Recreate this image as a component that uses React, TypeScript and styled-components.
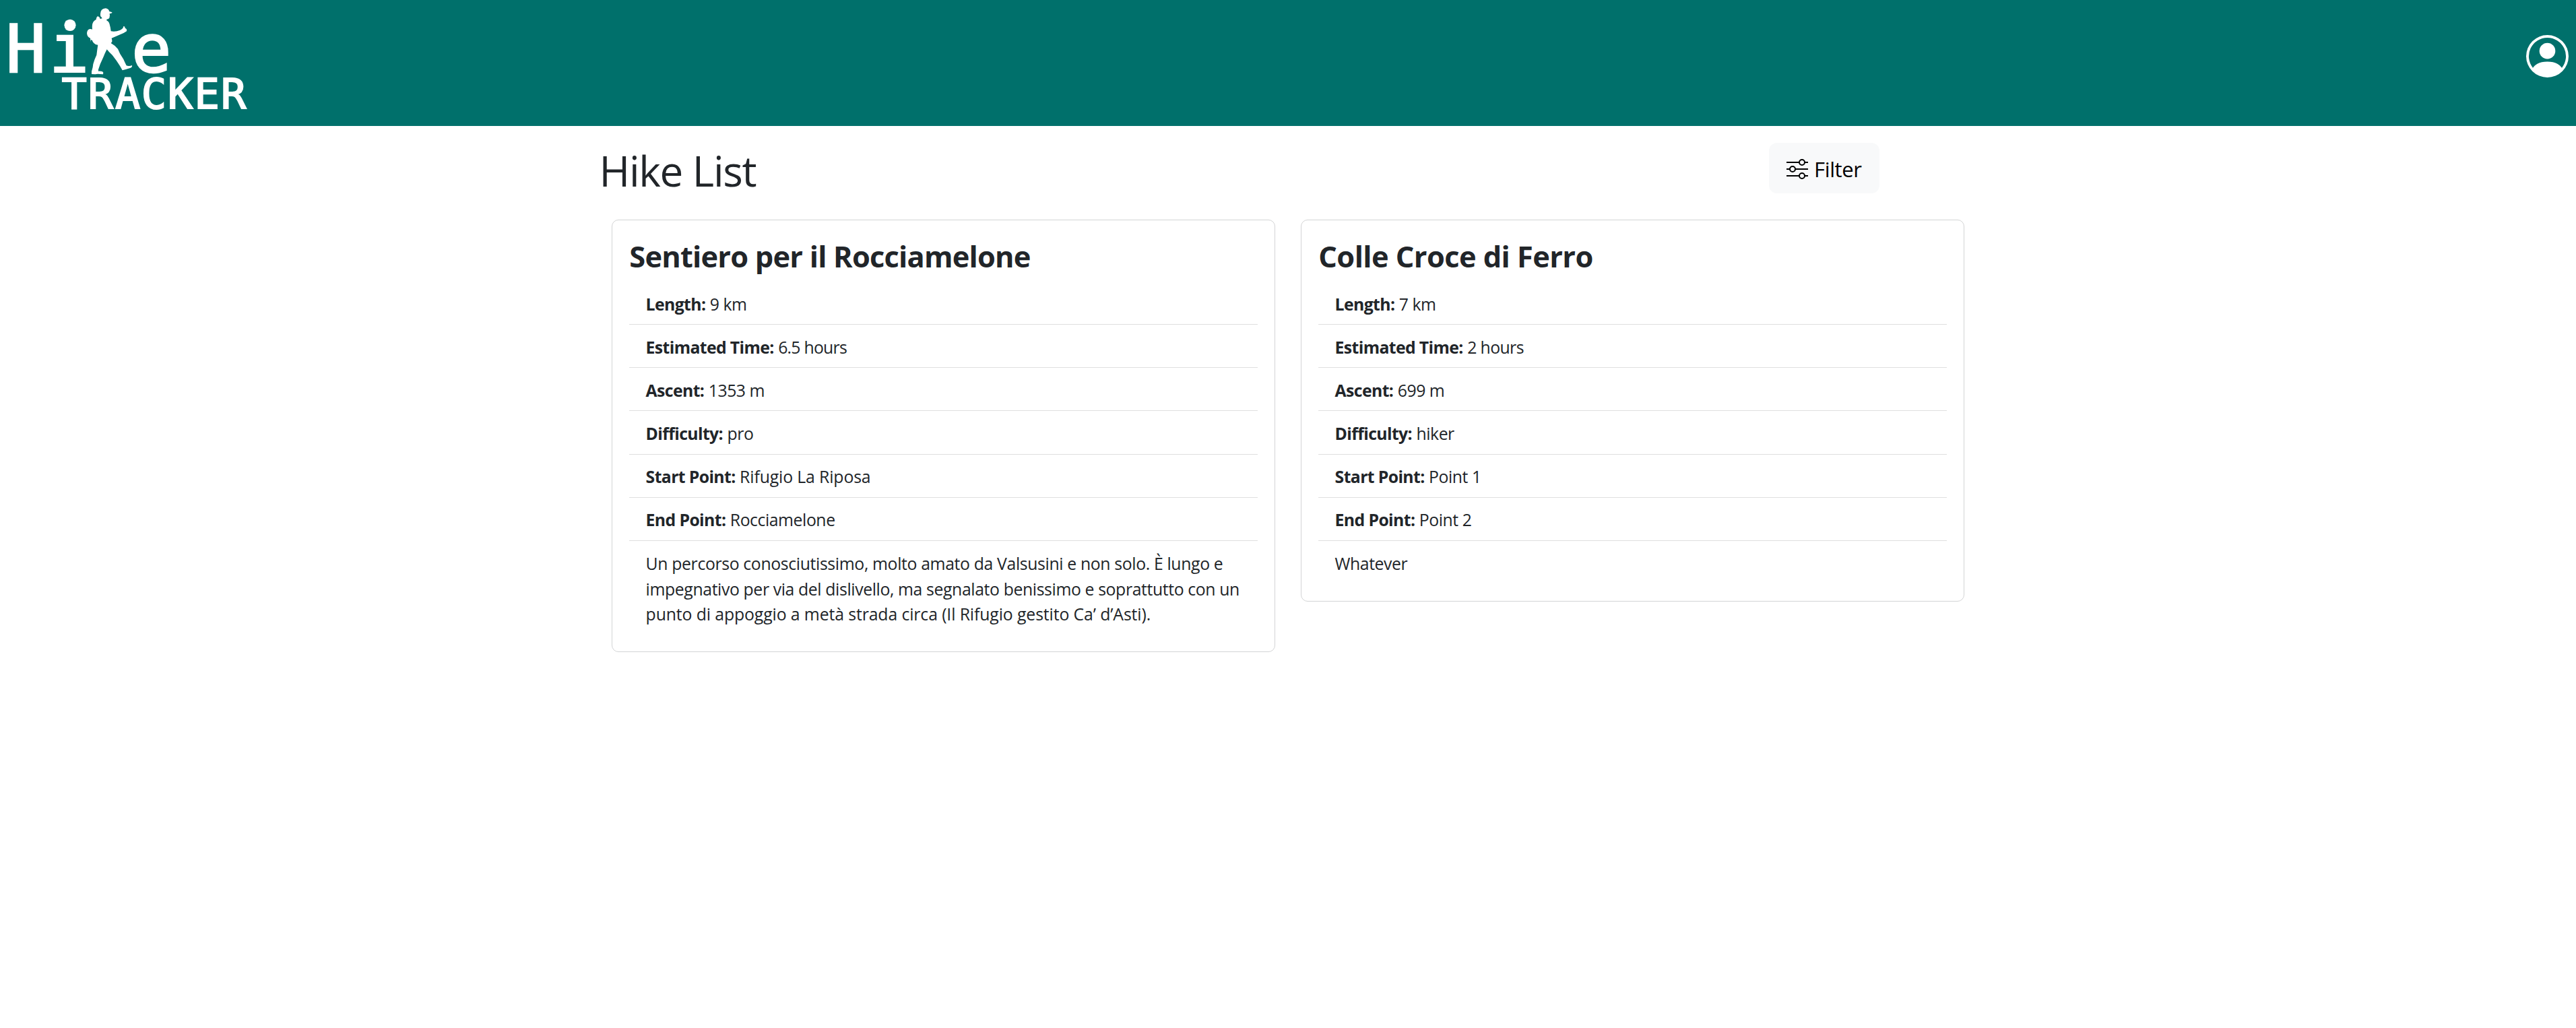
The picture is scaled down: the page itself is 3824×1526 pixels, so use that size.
import React from "react";
import styled, { createGlobalStyle } from "styled-components";
import { BsPersonCircle } from "react-icons/bs";

const GlobalStyle = createGlobalStyle`
  *, *::before, *::after { box-sizing: border-box; }
  body {
    margin: 0;
    background: #fff;
    color: #212529;
    font-family: "Open Sans", "Noto Sans", sans-serif;
    font-size: 24.8px;
    line-height: 37.9px;
  }
`;

const Header = styled.header`
  display: flex;
  justify-content: space-between;
  align-items: flex-start;
  height: 187px;
  padding-right: 11px;
  background: #00706b;
  color: #fff;
`;

const LogoSvg = styled.svg`
  display: block;
  fill: #fff;
  stroke: #fff;
  font-family: "DejaVu Sans Mono", monospace;
`;

const Account = styled.button`
  display: flex;
  margin: 52px 0 0;
  padding: 0;
  border: 0;
  background: none;
  color: inherit;
`;

const Page = styled.main`
  width: 2086px;
  margin: 0 auto;
`;

const Toolbar = styled.div`
  display: flex;
  justify-content: space-between;
  align-items: flex-start;
  height: 139px;
  padding: 25px 165px 0 20.5px;
`;

const PageTitle = styled.h1`
  margin: 3px 0 0;
  font-size: 62px;
  font-weight: 400;
  line-height: 76px;
  letter-spacing: -1.3px;
`;

const FilterButton = styled.button`
  display: flex;
  align-items: center;
  gap: 9px;
  width: 164px;
  height: 75px;
  padding: 0 0 0 26px;
  border: 0;
  border-radius: 12px;
  background: #f8f9fa;
  color: #000;
  font: 400 31px/47px "Open Sans", "Noto Sans", sans-serif;
  letter-spacing: -0.35px;
`;

const FilterText = styled.span`
  padding-top: 3px;
`;

const CardGrid = styled.div`
  display: grid;
  grid-template-columns: 985px 985px;
  column-gap: 38px;
  align-items: start;
  padding-left: 39px;
`;

const Card = styled.article`
  padding: 25.3px;
  border: 1px solid #d3d4d5;
  border-radius: 10px;
`;

const CardTitle = styled.h3<{ $tracking: number }>`
  margin: 0 0 10.6px;
  padding-top: 2px;
  font-size: 43.4px;
  font-weight: 700;
  line-height: 53px;
  letter-spacing: ${(p) => p.$tracking}px;
`;

const Details = styled.ul`
  margin: 0;
  padding: 0;
  list-style: none;
`;

const Detail = styled.li`
  padding: 14.65px 24.3px 10.65px;
  white-space: nowrap;

  &:not(:last-child) {
    border-bottom: 1px solid #dfdfdf;
  }
`;

const Label = styled.strong`
  font-weight: 700;
  letter-spacing: -0.62px;
`;

const Run = styled.span<{ $tracking?: number; $block?: boolean }>`
  display: ${(p) => (p.$block ? "block" : "inline")};
  letter-spacing: ${(p) => p.$tracking ?? -0.45}px;
`;

type TextRun = { text: string; tracking?: number };
type Hike = {
  title: string;
  tracking: number;
  facts: [string, TextRun][];
  description: TextRun[];
};

const hikes: Hike[] = [
  {
    title: "Sentiero per il Rocciamelone",
    tracking: -0.79,
    facts: [
      ["Length:", { text: "9 km" }],
      ["Estimated Time:", { text: "6.5 hours", tracking: -0.75 }],
      ["Ascent:", { text: "1353 m" }],
      ["Difficulty:", { text: "pro" }],
      ["Start Point:", { text: "Rifugio La Riposa", tracking: -0.13 }],
      ["End Point:", { text: "Rocciamelone" }],
    ],
    description: [
      { text: "Un percorso conosciutissimo, molto amato da Valsusini e non solo. È lungo e", tracking: -0.36 },
      { text: "impegnativo per via del dislivello, ma segnalato benissimo e soprattutto con un", tracking: -0.385 },
      { text: "punto di appoggio a metà strada circa (Il Rifugio gestito Ca’ d’Asti).", tracking: -0.11 },
    ],
  },
  {
    title: "Colle Croce di Ferro",
    tracking: -0.58,
    facts: [
      ["Length:", { text: "7 km" }],
      ["Estimated Time:", { text: "2 hours", tracking: -0.6 }],
      ["Ascent:", { text: "699 m" }],
      ["Difficulty:", { text: "hiker" }],
      ["Start Point:", { text: "Point 1" }],
      ["End Point:", { text: "Point 2" }],
    ],
    description: [{ text: "Whatever" }],
  },
];

function Logo() {
  return (
    <LogoSvg width="400" height="187" viewBox="0 0 400 187">
      <text x="8.8 73 195.2" y="107" fontSize="98" strokeWidth="2.4">
        Hie
      </text>
      <circle cx="104" cy="37.3" r="8.6" stroke="none" />
      <text x="91.4 130.7 171 209.7 249 288.5 328" y="161" fontSize="62" strokeWidth="2">
        TRACKER
      </text>
      <path
        stroke="none"
        transform="scale(.33333)"
        d="M447 62Q448 38 470 37Q484 39 487 51L500 55Q498 61 488 61L489 70L487 80Q484 85 476 86L474 90Q486 96 488 108Q493 125 494 139Q515 143 535 134Q549 128 550 117Q557 115 557 125Q567 128 564 139Q552 148 535 154Q515 163 497 170Q500 180 499 186L494 192Q512 202 525 218Q533 240 550 264Q557 280 563 292Q575 296 588 291Q590 298 582 302Q560 309 545 313Q540 304 533 292Q520 270 500 245Q485 232 476 220Q468 235 460 255Q445 285 438 310L438 317Q457 316 460 323L459 331Q430 327 425 331L408 330L408 318Q414 300 415 285Q420 265 430 245Q433 220 436 200Q425 200 418 192Q412 186 411 180L405 177L404 187L402 170Q388 165 387 148Q388 130 402 129Q412 130 411 132Q408 110 416 97Q422 90 428 87Q430 72 437 73Q444 75 446 84L455 82Q452 75 449 74Q446 70 447 62Z"
      />
    </LogoSvg>
  );
}

function SlidersIcon() {
  return (
    <svg width="32" height="32" viewBox="0 0 32 32" fill="none" stroke="#000" strokeWidth="2">
      <path d="M0 7H19M27 7H32M0 17H5M13 17H32M0 27H19M27 27H32" />
      <circle cx="23" cy="7" r="4" />
      <circle cx="9" cy="17" r="4" />
      <circle cx="23" cy="27" r="4" />
    </svg>
  );
}

function HikeCard({ hike }: { hike: Hike }) {
  return (
    <Card>
      <CardTitle $tracking={hike.tracking}>{hike.title}</CardTitle>
      <Details>
        {hike.facts.map(([label, value]) => (
          <Detail key={label}>
            <Label>{label}</Label> <Run $tracking={value.tracking}>{value.text}</Run>
          </Detail>
        ))}
        <Detail>
          {hike.description.map((line) => (
            <Run key={line.text} $block $tracking={line.tracking}>
              {line.text}
            </Run>
          ))}
        </Detail>
      </Details>
    </Card>
  );
}

export default function App() {
  return (
    <>
      <GlobalStyle />
      <Header>
        <Logo />
        <Account aria-label="Account">
          <BsPersonCircle size={63} />
        </Account>
      </Header>
      <Page>
        <Toolbar>
          <PageTitle>Hike List</PageTitle>
          <FilterButton>
            <SlidersIcon />
            <FilterText>Filter</FilterText>
          </FilterButton>
        </Toolbar>
        <CardGrid>
          {hikes.map((hike) => (
            <HikeCard key={hike.title} hike={hike} />
          ))}
        </CardGrid>
      </Page>
    </>
  );
}
